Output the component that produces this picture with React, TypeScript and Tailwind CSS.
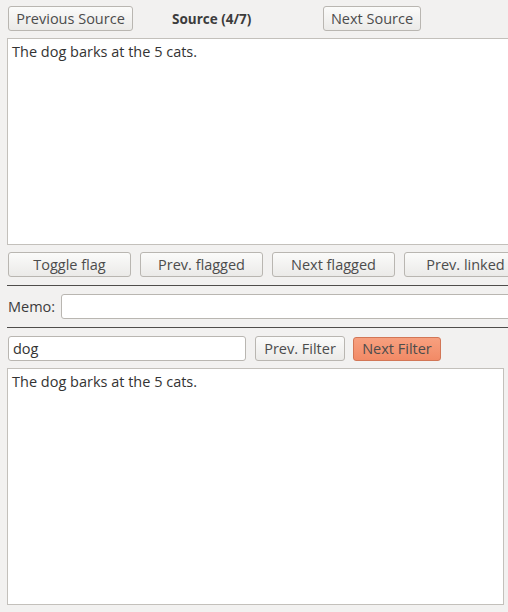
import React from 'react';

const font = { fontFamily: '"Open Sans", "Noto Sans", "DejaVu Sans", sans-serif' };

function Btn({ label, className = '' }: { label: string; className?: string }) {
  return (
    <button
      className={`flex h-[25px] shrink-0 items-center justify-center rounded-[3px] border border-[#b9b6b1] bg-gradient-to-b from-[#fbfbfa] to-[#ebeae8] pt-[2px] text-[14.5px] leading-none text-[#4c4c4c] ${className}`}
    >
      {label}
    </button>
  );
}

export default function App() {
  return (
    <div
      className="h-[612px] w-[508px] overflow-hidden bg-[#f2f1f0] text-[#3c3c3c]"
      style={font}
    >
      <div className="w-[560px]">
        {/* Source navigation */}
        <div className="mt-[6px] flex h-[25px] items-center pl-[8px]">
          <Btn label="Previous Source" className="w-[125px]" />
          <span className="ml-[39px] w-[151px] pt-[2px] text-[13.5px] font-bold text-[#3c3c3c]">Source (4/7)</span>
          <Btn label="Next Source" className="w-[98px]" />
        </div>

        {/* Source text */}
        <div className="ml-[7px] mt-[7px] h-[207px] border border-[#c3c0bb] bg-white px-[4px] py-[2px] text-[14.5px] text-[#333333]">
          The dog barks at the 5 cats.
        </div>

        {/* Flag buttons */}
        <div className="ml-[8px] mt-[7px] flex gap-[9px]">
          <Btn label="Toggle flag" className="w-[123px]" />
          <Btn label="Prev. flagged" className="w-[123px]" />
          <Btn label="Next flagged" className="w-[123px]" />
          <Btn label="Prev. linked" className="w-[123px]" />
        </div>

        <div className="ml-[7px] mt-[8px] h-px bg-[#4f4d4b]" />

        {/* Memo */}
        <div className="mt-[8px] flex h-[25px] items-center pl-[8px]">
          <span className="pt-[1px] text-[14.5px] text-[#3c3c3c]">Memo:</span>
          <div className="ml-[6px] h-[25px] flex-1 rounded-[3px] border border-[#b9b6b1] bg-white" />
        </div>

        <div className="ml-[7px] mt-[8px] h-px bg-[#4f4d4b]" />

        {/* Filter */}
        <div className="mt-[8px] flex items-center pl-[8px]">
          <div className="flex h-[25px] w-[238px] items-center rounded-[3px] border border-[#b9b6b1] bg-white px-[4px] pt-[1px] text-[14.5px] text-[#333333]">
            dog
          </div>
          <Btn label="Prev. Filter" className="ml-[9px] h-[24px] w-[90px]" />
          <button className="ml-[8px] flex h-[24px] w-[88px] items-center justify-center rounded-[3px] border border-[#d27656] bg-gradient-to-b from-[#f7a07f] to-[#f28a66] pt-[2px] text-[14.5px] leading-none text-[#4c4c4c]">
            Next Filter
          </button>
        </div>

        {/* Filtered text */}
        <div className="ml-[7px] mt-[7px] h-[237px] w-[497px] border border-[#c3c0bb] bg-white px-[4px] py-[2px] text-[14.5px] text-[#333333]">
          The dog barks at the 5 cats.
        </div>
      </div>
    </div>
  );
}
